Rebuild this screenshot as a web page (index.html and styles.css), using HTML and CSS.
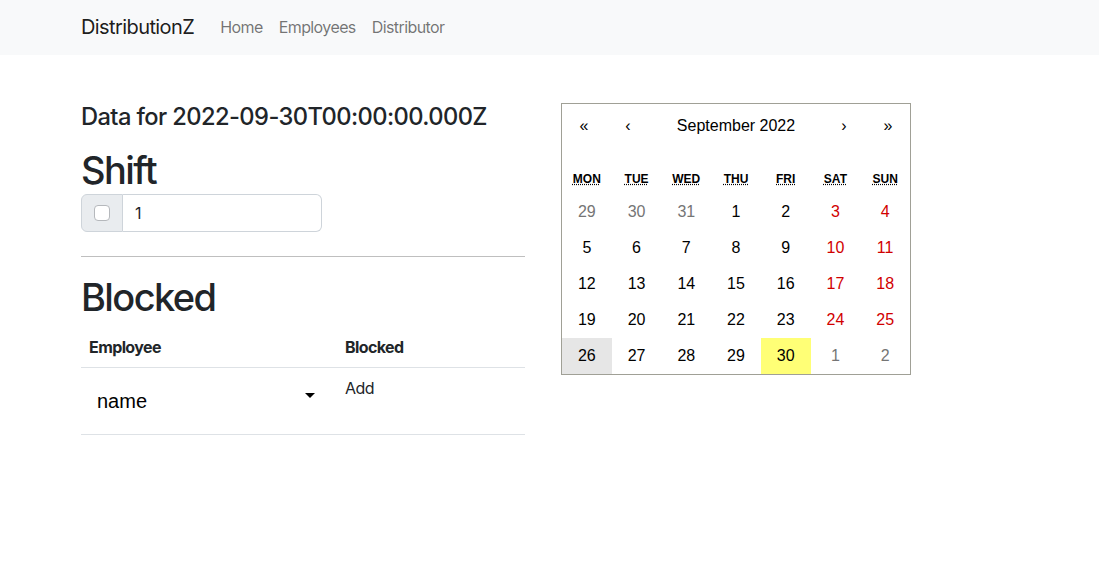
FILE: index.html
```html
<!DOCTYPE html>
<html lang="en">
<head>
<meta charset="utf-8">
<title>DistributionZ</title>
<link rel="stylesheet" href="styles.css">
</head>
<body>
<nav class="navbar">
  <div class="container nav-inner">
    <a class="brand" href="#">DistributionZ</a>
    <a class="nav-link" href="#">Home</a>
    <a class="nav-link" href="#">Employees</a>
    <a class="nav-link" href="#">Distributor</a>
  </div>
</nav>
<main class="container main">
  <section class="left">
    <h4 class="date-title">Data for 2022-09-30T00:00:00.000Z</h4>
    <h1 class="heading heading-shift">Shift</h1>
    <div class="input-group">
      <span class="ig-text"><span class="check"></span></span>
      <input class="ig-input" type="text" value="1">
    </div>
    <hr class="rule">
    <h1 class="heading heading-blocked">Blocked</h1>
    <table class="table">
      <thead>
        <tr><th class="col-emp">Employee</th><th>Blocked</th></tr>
      </thead>
      <tbody>
        <tr>
          <td class="col-emp">
            <div class="select">
              <span class="select-value">name</span>
              <svg class="caret" viewBox="0 0 24 24" width="24" height="24"><path d="M7 10l5 5 5-5z" fill="#000"/></svg>
            </div>
          </td>
          <td class="add-cell">Add</td>
        </tr>
      </tbody>
    </table>
  </section>
  <section class="calendar">
    <div class="cal-nav">
      <button class="cal-arrow">«</button>
      <button class="cal-arrow">‹</button>
      <button class="cal-label">September 2022</button>
      <button class="cal-arrow">›</button>
      <button class="cal-arrow">»</button>
    </div>
    <div class="weekdays">
      <div><abbr title="Monday">Mon</abbr></div>
      <div><abbr title="Tuesday">Tue</abbr></div>
      <div><abbr title="Wednesday">Wed</abbr></div>
      <div><abbr title="Thursday">Thu</abbr></div>
      <div><abbr title="Friday">Fri</abbr></div>
      <div><abbr title="Saturday">Sat</abbr></div>
      <div><abbr title="Sunday">Sun</abbr></div>
    </div>
    <div class="days">
      <button class="tile neighbor">29</button>
      <button class="tile neighbor">30</button>
      <button class="tile neighbor">31</button>
      <button class="tile">1</button>
      <button class="tile">2</button>
      <button class="tile weekend">3</button>
      <button class="tile weekend">4</button>
      <button class="tile">5</button>
      <button class="tile">6</button>
      <button class="tile">7</button>
      <button class="tile">8</button>
      <button class="tile">9</button>
      <button class="tile weekend">10</button>
      <button class="tile weekend">11</button>
      <button class="tile">12</button>
      <button class="tile">13</button>
      <button class="tile">14</button>
      <button class="tile">15</button>
      <button class="tile">16</button>
      <button class="tile weekend">17</button>
      <button class="tile weekend">18</button>
      <button class="tile">19</button>
      <button class="tile">20</button>
      <button class="tile">21</button>
      <button class="tile">22</button>
      <button class="tile">23</button>
      <button class="tile weekend">24</button>
      <button class="tile weekend">25</button>
      <button class="tile hover">26</button>
      <button class="tile">27</button>
      <button class="tile">28</button>
      <button class="tile">29</button>
      <button class="tile now">30</button>
      <button class="tile neighbor">1</button>
      <button class="tile neighbor">2</button>
    </div>
  </section>
</main>
</body>
</html>
```

FILE: styles.css
```css
* { box-sizing: border-box; }

body {
  margin: 0;
  font-family: Inter, "Liberation Sans", sans-serif;
  font-size: 16px;
  line-height: 1.5;
  letter-spacing: -0.037em;
  color: #212529;
  background: #fff;
}

.container {
  width: 961px;
  margin: 0 auto;
  padding: 0 12px;
}

.navbar {
  background: #f8f9fa;
}

.nav-inner {
  display: flex;
  align-items: center;
  height: 55px;
  padding-bottom: 1px;
}

.brand {
  font-size: 20px;
  line-height: 30px;
  color: rgba(0, 0, 0, 0.9);
  text-decoration: none;
  margin-right: 18px;
}

.nav-link {
  color: rgba(0, 0, 0, 0.55);
  text-decoration: none;
  padding: 8px;
  line-height: 24px;
}

.main {
  display: flex;
  gap: 36px;
  align-items: flex-start;
  margin-top: 48px;
}

.left {
  width: 444px;
}

.date-title {
  font-size: 23.7px;
  font-weight: 500;
  line-height: 1.2;
  margin: 0 0 14.6px;
}

.heading {
  font-size: 38px;
  font-weight: 500;
  line-height: 48px;
  letter-spacing: -0.042em;
  margin: 0;
}

.heading-blocked {
  margin-bottom: 6px;
}

.input-group {
  display: flex;
  width: 241px;
  height: 38px;
}

.ig-text {
  display: flex;
  align-items: center;
  justify-content: center;
  width: 42px;
  background: #e9ecef;
  border: 1px solid #ced4da;
  border-radius: 6px 0 0 6px;
}

.check {
  width: 16px;
  height: 16px;
  border: 1px solid #b5b8bc;
  border-radius: 4px;
  background: #fff;
}

.ig-input {
  flex: 1;
  min-width: 0;
  border: 1px solid #ced4da;
  border-left: 0;
  border-radius: 0 6px 6px 0;
  padding: 6px 12px;
  font: inherit;
  letter-spacing: inherit;
  color: #212529;
}

.rule {
  margin: 24px 0 16px;
  border: 0;
  border-top: 1px solid #bfbfbf;
}

.table {
  width: 100%;
  border-collapse: collapse;
}

.table th {
  text-align: left;
  font-weight: 700;
  padding: 8px;
  border-bottom: 1px solid #dee2e6;
}

.table td {
  padding: 8px;
  vertical-align: top;
  border-bottom: 1px solid #dee2e6;
}

.col-emp {
  width: 256px;
}

.select {
  position: relative;
  height: 50px;
  display: flex;
  align-items: center;
  padding-left: 8px;
  font-family: "Liberation Sans", Arial, sans-serif;
  font-size: 20px;
  letter-spacing: normal;
  color: #000;
}

.caret {
  position: absolute;
  right: 7px;
  top: 7px;
}

.add-cell {
  line-height: 24px;
  color: #212529;
}

.calendar {
  width: 350px;
  border: 1px solid #a0a096;
  font-family: "Liberation Sans", Arial, sans-serif;
  letter-spacing: normal;
  line-height: 18px;
  background: #fff;
}

.cal-nav {
  display: flex;
  height: 44px;
  margin-bottom: 16px;
}

.cal-nav button {
  border: 0;
  background: none;
  font: inherit;
  font-size: 16px;
  color: #000;
  padding: 0;
  margin: 0;
}

.cal-arrow {
  min-width: 44px;
}

.cal-label {
  flex-grow: 1;
}

.weekdays {
  display: grid;
  grid-template-columns: repeat(7, 1fr);
  text-align: center;
  text-transform: uppercase;
  font-weight: 700;
  font-size: 12px;
  color: #000;
}

.weekdays div {
  padding: 6px;
}

.weekdays abbr {
  text-decoration: underline dotted;
}

.days {
  display: grid;
  grid-template-columns: repeat(7, 1fr);
}

.tile {
  border: 0;
  margin: 0;
  background: none;
  font: inherit;
  font-size: 16px;
  line-height: 16px;
  padding: 10px 6.6667px;
  text-align: center;
  color: #000;
}

.tile.weekend { color: #d10000; }
.tile.neighbor { color: #757575; }
.tile.hover { background: #e6e6e6; }
.tile.now { background: #ffff76; }
```
